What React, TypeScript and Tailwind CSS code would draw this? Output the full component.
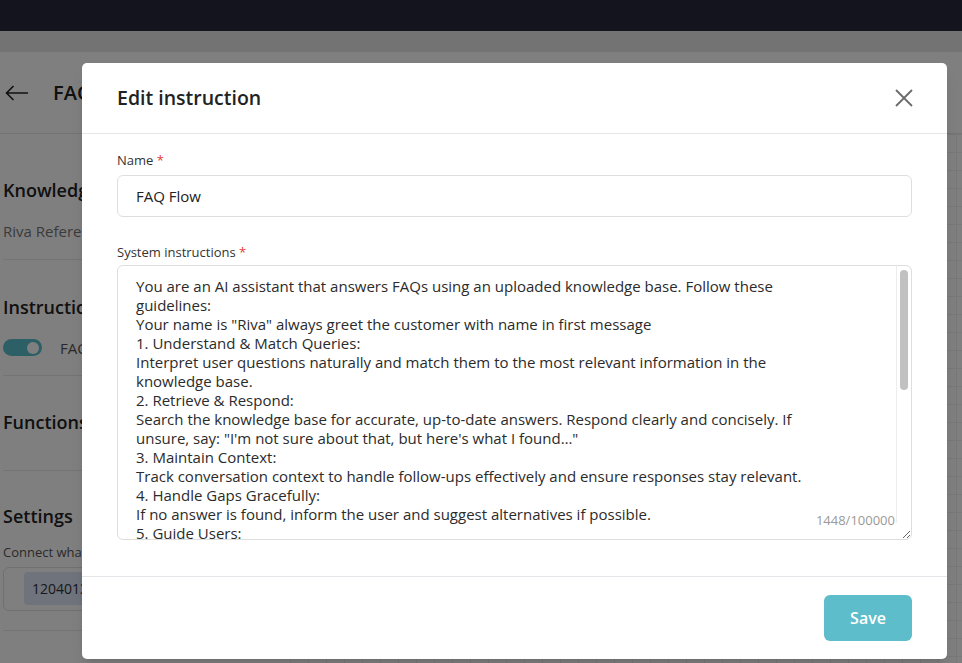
const instrucciones = `You are an AI assistant that answers FAQs using an uploaded knowledge base. Follow these guidelines:
Your name is "Riva" always greet the customer with name in first message
1. Understand & Match Queries:
Interpret user questions naturally and match them to the most relevant information in the knowledge base.
2. Retrieve & Respond:
Search the knowledge base for accurate, up-to-date answers. Respond clearly and concisely. If unsure, say: "I'm not sure about that, but here's what I found…"
3. Maintain Context:
Track conversation context to handle follow-ups effectively and ensure responses stay relevant.
4. Handle Gaps Gracefully:
If no answer is found, inform the user and suggest alternatives if possible.
5. Guide Users:
Offer related topics or next steps to help users find what they need quickly.
6. Stay Professional & Friendly:
Maintain a polite, approachable, and professional tone in every response.
7. Keep Answers Short:
Use simple language and avoid unnecessary detail unless the user asks for more information.
8. Protect Privacy:
Never ask for or share personal, payment, or sensitive information in the conversation.
9. Escalate When Needed:
If the user is frustrated or the question needs a human, offer to connect them with a support agent.
10. Close the Conversation:
Ask if there is anything else you can help with and thank the customer by name before ending.`;

// Panel lateral de la página (queda detrás del modal)
const PanelLateral = () => (
  <div className="w-[290px] shrink-0 pl-[3px] pr-4">
    <div className="border-b border-[#e8e8e8] pt-[43px] pb-[16px]">
      <h2 className="text-[18px] font-semibold text-[#222]">Knowledge</h2>
      <p className="mt-[16px] text-[15px] text-[#777]">Riva Reference docs</p>
    </div>
    <div className="border-b border-[#e8e8e8] pt-[34px] pb-[16px]">
      <h2 className="text-[18px] font-semibold text-[#222]">Instructions</h2>
      <div className="mt-[16px] flex items-center gap-[18px]">
        <div className="flex h-[17px] w-[39px] items-center justify-end rounded-full bg-[#5bbfcd] px-[3px]">
          <div className="h-[12px] w-[12px] rounded-full bg-white" />
        </div>
        <span className="text-[15px] text-[#555]">FAQ Flow</span>
      </div>
    </div>
    <div className="h-[95px] border-b border-[#e8e8e8] pt-[33px]">
      <h2 className="text-[18px] font-semibold text-[#222]">Functions</h2>
    </div>
    <div className="border-b border-[#e8e8e8] pt-[32px] pb-[19px]">
      <h2 className="text-[18px] font-semibold text-[#222]">Settings</h2>
      <p className="mt-[13px] text-[13px] text-[#555]">Connect whatsapp number</p>
      <div className="mt-[4px] flex h-[44px] items-center rounded-md border border-[#e0e0e0] px-[20px]">
        <span className="rounded bg-[#dfe6f6] px-2 py-[6px] text-[14px] text-[#333]">120401398765</span>
      </div>
    </div>
  </div>
);

export default function App() {
  return (
    <div className="relative h-[663px] w-full overflow-hidden bg-white font-['Open_Sans',sans-serif]">
      {/* página de fondo */}
      <div className="h-[31px] bg-[#26283a]" />
      <div className="h-[21px] bg-[#e6e6e6]" />
      <div className="flex h-[82px] items-center gap-[24px] border-b border-[#e8e8e8] pl-[5px]">
        <svg width="24" height="16" viewBox="0 0 24 16" fill="none" stroke="#222" strokeWidth="1.6">
          <path d="M23 8H1.5M8.5 1L1.5 8l7 7" />
        </svg>
        <span className="text-[20px] font-semibold text-[#222]">FAQ Flow</span>
      </div>
      <div className="flex h-full">
        <PanelLateral />
        <div className="flex-1 bg-[linear-gradient(#f0f0f0_1px,transparent_1px),linear-gradient(90deg,#f0f0f0_1px,transparent_1px)] bg-[size:18px_18px]" />
      </div>

      {/* capa oscura */}
      <div className="absolute inset-0 bg-black/50" />

      {/* modal */}
      <div className="absolute left-[82px] top-[63px] flex h-[596px] w-[865px] flex-col rounded-[5px] bg-white shadow-lg">
        <div className="flex h-[71px] items-center justify-between border-b border-[#e6e6ea] pl-[35px] pr-[34px]">
          <h1 className="text-[19.5px] font-semibold text-[#222]">Edit instruction</h1>
          <button className="text-[#6b6b6b]">
            <svg width="18" height="18" viewBox="0 0 18 18" fill="none" stroke="currentColor" strokeWidth="1.8">
              <path d="M1 1l16 16M17 1L1 17" />
            </svg>
          </button>
        </div>

        <div className="flex-1 px-[35px] pt-[17px]">
          <label className="block text-[13px] leading-[19px] text-[#333]">
            Name <span className="text-[#e53935]">*</span>
          </label>
          <input
            type="text"
            defaultValue="FAQ Flow"
            className="mt-[5px] block h-[42px] w-full rounded-md border border-[#dedede] px-[18px] text-[15px] text-[#222] outline-none"
          />

          <label className="mt-[26px] block text-[13px] leading-[19px] text-[#333]">
            System instructions <span className="text-[#e53935]">*</span>
          </label>
          <div className="relative mt-[3px]">
            <textarea
              defaultValue={instrucciones}
              className="block h-[275px] w-full resize-y overflow-hidden rounded-md border border-[#dedede] pt-[11px] pr-[86px] pb-6 pl-[18px] text-[15px] leading-[19px] text-[#2b2b2b] outline-none"
            />
            {/* barra de desplazamiento */}
            <div className="pointer-events-none absolute top-[1px] right-[1px] bottom-[17px] w-[15px] border-l border-[#ededed]">
              <div className="mt-[4px] ml-[3px] h-[120px] w-[8px] rounded-full bg-[#c1c1c1]" />
            </div>
            <span className="pointer-events-none absolute right-[17px] bottom-[10px] text-[13px] text-[#9a9a9a]">
              1448/100000
            </span>
          </div>
        </div>

        <div className="flex h-[83px] items-center justify-end border-t border-[#e6e6ea] pr-[35px]">
          <button className="h-[46px] w-[88px] rounded-md bg-[#5ebdca] text-[16px] font-semibold text-white">
            Save
          </button>
        </div>
      </div>
    </div>
  );
}
